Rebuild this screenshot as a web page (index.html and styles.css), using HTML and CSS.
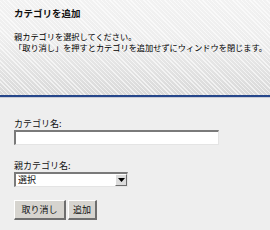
FILE: index.html
```html
<!DOCTYPE html>
<html lang="ja">
<head>
<meta charset="utf-8">
<link rel="stylesheet" href="styles.css">
</head>
<body>
<div class="header">
  <h1 class="title">カテゴリを追加</h1>
  <p class="desc">親カテゴリを選択してください。<br>「取り消し」を押すとカテゴリを追加せずにウィンドウを閉じます。</p>
</div>
<div class="form">
  <label class="label">カテゴリ名:</label>
  <div class="input"></div>
  <label class="label label2">親カテゴリ名:</label>
  <div class="select"><span class="select-text">選択</span><span class="select-btn"><svg width="7" height="4" viewBox="0 0 7 4"><path d="M0 0H7L3.5 4Z" fill="#000"/></svg></span></div>
  <div class="buttons">
    <span class="btn">取り消し</span>
    <span class="btn">追加</span>
  </div>
</div>
</body>
</html>
```
FILE: styles.css
```css
html, body {
  margin: 0;
  padding: 0;
  background: #eeeeee;
  font-family: "Noto Sans CJK JP", "Noto Sans", sans-serif;
  color: #111;
  width: 270px;
  height: 230px;
  overflow: hidden;
}
.header {
  height: 97px;
  box-sizing: border-box;
  padding: 6px 0 0 14px;
  background:
    repeating-linear-gradient(45deg, rgba(255,255,255,0.6) 0 1px, rgba(255,255,255,0) 1px 3px),
    linear-gradient(#f2f2f2, #eeeeee 40%, #d9d9d9);
  border-bottom: 2px solid #25468a;
  box-shadow: 0 1px 0 #c9cdd6;
}
.title {
  margin: 0;
  font-size: 9.5px;
  font-weight: bold;
  line-height: 14px;
}
.desc {
  margin: 11px 0 0;
  font-size: 8.2px;
  line-height: 11px;
  white-space: nowrap;
  color: #000;
}
.form {
  padding: 21px 0 0 14px;
}
.label {
  display: block;
  font-size: 9px;
  line-height: 12px;
}
.label2 {
  margin-top: 15px;
}
.input {
  width: 205px;
  height: 15px;
  box-sizing: border-box;
  background: #fff;
  border-top: 2px solid #7a7a7a;
  border-left: 2px solid #7a7a7a;
  border-right: 1px solid #e4e4e4;
  border-bottom: 1px solid #e4e4e4;
}
.select {
  display: flex;
  width: 114px;
  height: 15px;
  box-sizing: border-box;
  background: #fff;
  border-top: 2px solid #7a7a7a;
  border-left: 2px solid #7a7a7a;
  border-right: 1px solid #e4e4e4;
  border-bottom: 1px solid #e4e4e4;
}
.select-text {
  flex: 1;
  font-size: 9px;
  line-height: 12px;
  padding-left: 2px;
}
.select-btn {
  width: 12px;
  box-sizing: border-box;
  background: #dcdcdc;
  border-top: 1px solid #fff;
  border-left: 1px solid #fff;
  border-right: 1px solid #6c6c6c;
  border-bottom: 1px solid #6c6c6c;
  display: flex;
  align-items: center;
  justify-content: center;
}
.buttons {
  display: flex;
  gap: 2px;
  margin-top: 13px;
}
.btn {
  height: 20px;
  box-sizing: border-box;
  padding: 0 5px;
  font-size: 9px;
  line-height: 17px;
  background: #d6d4cf;
  border-top: 1px solid #fff;
  border-left: 1px solid #fff;
  border-right: 2px solid #6e6e6e;
  border-bottom: 2px solid #6e6e6e;
}
.btn:first-child {
  width: 52px;
  text-align: center;
}
.btn:last-child {
  width: 29px;
  text-align: center;
  padding: 0;
}
```
